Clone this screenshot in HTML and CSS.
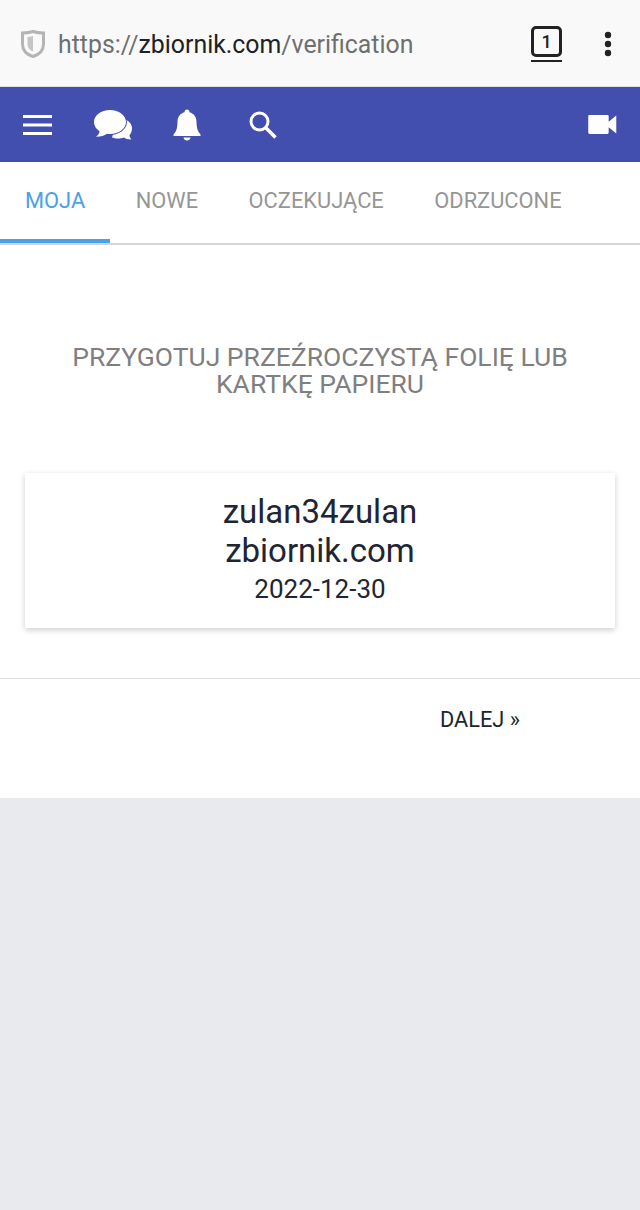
FILE: index.html
```html
<!DOCTYPE html>
<html lang="pl">
<head>
<meta charset="UTF-8">
<meta name="viewport" content="width=device-width, initial-scale=1.0">
<title>Weryfikacja</title>
<link rel="stylesheet" href="styles.css">
</head>
<body>

<div class="browser-bar">
    <svg class="shield" width="26" height="30" viewBox="0 0 26 30">
        <path d="M13 2.5 C9.5 3.6 6 4 2.5 4 V15 C2.5 21 6.5 25.5 13 27.5 C19.5 25.5 23.5 21 23.5 15 V4 C20 4 16.5 3.6 13 2.5 Z" fill="none" stroke="#b4b4b4" stroke-width="3"/>
        <path d="M13 7 C11 7.6 9.5 7.9 7.5 8 V15 C7.5 18.5 9.5 21 13 22.5 Z" fill="#c4c4c4"/>
    </svg>
    <div class="url"><span class="url-dim">https://</span>zbiornik.com<span class="url-dim">/verification</span></div>
    <div class="tab-count">
        <span class="tab-box">1</span>
    </div>
    <svg class="kebab" width="8" height="26" viewBox="0 0 8 26">
        <circle cx="4" cy="4" r="3.2" fill="#222"/>
        <circle cx="4" cy="13" r="3.2" fill="#222"/>
        <circle cx="4" cy="22" r="3.2" fill="#222"/>
    </svg>
</div>

<div class="topbar">
    <div class="topbar-left">
        <svg class="icon-menu" width="30" height="20" viewBox="0 0 30 20">
            <path d="M0 1.5H29M0 10H29M0 18.5H29" stroke="#fff" stroke-width="3"/>
        </svg>
        <svg class="icon-chat" width="38" height="30" viewBox="0 0 38 30">
            <path d="M24 8 C32 8 38 12.500 38 18 C38 21.500 37 23.500 35.500 25 C35.500 26.500 36.200 28 37.500 29.500 C33.500 29.500 31.500 28.500 30 27.500 C28 28.300 26 28.500 24 28.500 C21.500 28.500 19.500 28 18 27.500 Z" fill="#fff"/>
            <path d="M16 0 C7.200 0 0 5.200 0 12 C0 15.800 2 19 5.500 21.200 C5.500 23.200 4.200 25.300 2 26.800 C6.800 26.800 10.500 25.500 13 23.700 C14 23.900 15 24 16 24 C24.800 24 32 18.800 32 12 C32 5.200 24.800 0 16 0 Z" fill="#fff" stroke="#434fae" stroke-width="1.800" paint-order="stroke"/>
        </svg>
        <svg class="icon-bell" width="28" height="32" viewBox="0 0 28 32">
            <path d="M14 0.500 C12.500 0.500 11.500 1.500 11.500 3.200 C7 4.500 4.500 8 4.500 13 C4.500 18.500 3.500 22.500 0.500 25.500 V27 H27.500 V25.500 C24.500 22.500 23.500 18.500 23.500 13 C23.500 8 21 4.500 16.500 3.200 C16.500 1.500 15.500 0.500 14 0.500 Z" fill="#fff"/>
            <path d="M10.500 28.500 H17.500 C17.300 30.500 15.800 31.500 14 31.500 C12.200 31.500 10.700 30.500 10.500 28.500 Z" fill="#fff"/>
        </svg>
        <svg class="icon-search" width="30" height="30" viewBox="0 0 30 30">
            <circle cx="11.500" cy="11.500" r="8.500" fill="none" stroke="#fff" stroke-width="3"/>
            <path d="M17.500 17.500 L27.500 27.500" stroke="#fff" stroke-width="3.500"/>
        </svg>
    </div>
    <svg class="icon-video" width="29" height="19" viewBox="0 0 30 20">
        <path d="M1.500 0 H20 C21 0 21.500 0.500 21.500 1.500 V7 L29.500 0.500 V19.500 L21.500 13 V18.500 C21.500 19.500 21 20 20 20 H1.500 C0.500 20 0 19.500 0 18.500 V1.500 C0 0.500 0.500 0 1.500 0 Z" fill="#fff"/>
    </svg>
</div>

<div class="tabs">
    <div class="tab active">MOJA</div>
    <div class="tab">NOWE</div>
    <div class="tab">OCZEKUJĄCE</div>
    <div class="tab">ODRZUCONE</div>
</div>

<div class="panel">
    <h2 class="notice">PRZYGOTUJ PRZEŹROCZYSTĄ FOLIĘ LUB KARTKĘ PAPIERU</h2>
    <div class="card">
        <div class="card-line">zulan34zulan</div>
        <div class="card-line">zbiornik.com</div>
        <div class="card-date">2022-12-30</div>
    </div>
    <div class="actions">
        <a class="next-link" href="#">DALEJ »</a>
    </div>
</div>

</body>
</html>
```

FILE: styles.css
```css
body {
    font-family: Roboto, "Liberation Sans", sans-serif;
    background-color: #e9eaee;
    margin: 0;
    padding: 0;
}

.browser-bar {
    height: 87px;
    box-sizing: border-box;
    background-color: #f9f9f9;
    border-bottom: 1px solid #dfe1ea;
    display: flex;
    align-items: center;
    padding: 2px 28px 0 20px;
}

.shield {
    flex: none;
    margin-right: 12px;
}

.url {
    flex: 1;
    font-size: 24.85px;
    color: #212121;
}

.url-dim {
    color: #6f6f6f;
}

.tab-count {
    width: 31px;
    height: 36px;
    box-sizing: border-box;
    border-bottom: 2px solid #222;
    margin: 0 42px 0 0;
}

.tab-box {
    display: block;
    width: 31px;
    height: 31px;
    box-sizing: border-box;
    border: 3px solid #222;
    border-radius: 5px;
    font-size: 18px;
    font-weight: 500;
    line-height: 25px;
    text-align: center;
    color: #222;
}

.topbar {
    height: 75px;
    background-color: #434fae;
    display: flex;
    align-items: center;
    justify-content: space-between;
    padding: 0 23px;
}

.topbar-left {
    display: flex;
    align-items: center;
}

.icon-menu {
    margin-right: 41px;
}

.icon-chat {
    margin-right: 41px;
}

.icon-bell {
    margin-right: 47px;
}

.tabs {
    height: 83px;
    box-sizing: border-box;
    background-color: #fff;
    display: flex;
    gap: 0.5px;
    border-bottom: 2px solid #d5d6da;
}

.tab {
    padding: 26px 25px 0;
    font-size: 21.85px;
    color: #969696;
    height: 81px;
    box-sizing: border-box;
}

.tab.active {
    color: #4aa1e6;
    border-bottom: 4px solid #4aa1e6;
}

.panel {
    background-color: #fff;
    height: 553px;
    box-sizing: border-box;
    padding-top: 99px;
}

.notice {
    margin: 0 50px;
    font-size: 26.5px;
    font-weight: 400;
    line-height: 26.5px;
    text-align: center;
    color: #7f7f7f;
}

.card {
    margin: 76px 25px 0;
    height: 155px;
    box-sizing: border-box;
    padding-top: 19px;
    background-color: #fff;
    box-shadow: 0 2px 6px rgba(0, 0, 0, 0.2);
    text-align: center;
    color: #212533;
}

.card-line {
    font-size: 33px;
    line-height: 39px;
}

.card-date {
    font-size: 26px;
    line-height: 38px;
}

.actions {
    margin-top: 50px;
    border-top: 1px solid #dcdcdf;
    padding: 28px 120px 0 0;
    text-align: right;
}

.next-link {
    font-size: 21.8px;
    color: #212529;
    text-decoration: none;
}
```
